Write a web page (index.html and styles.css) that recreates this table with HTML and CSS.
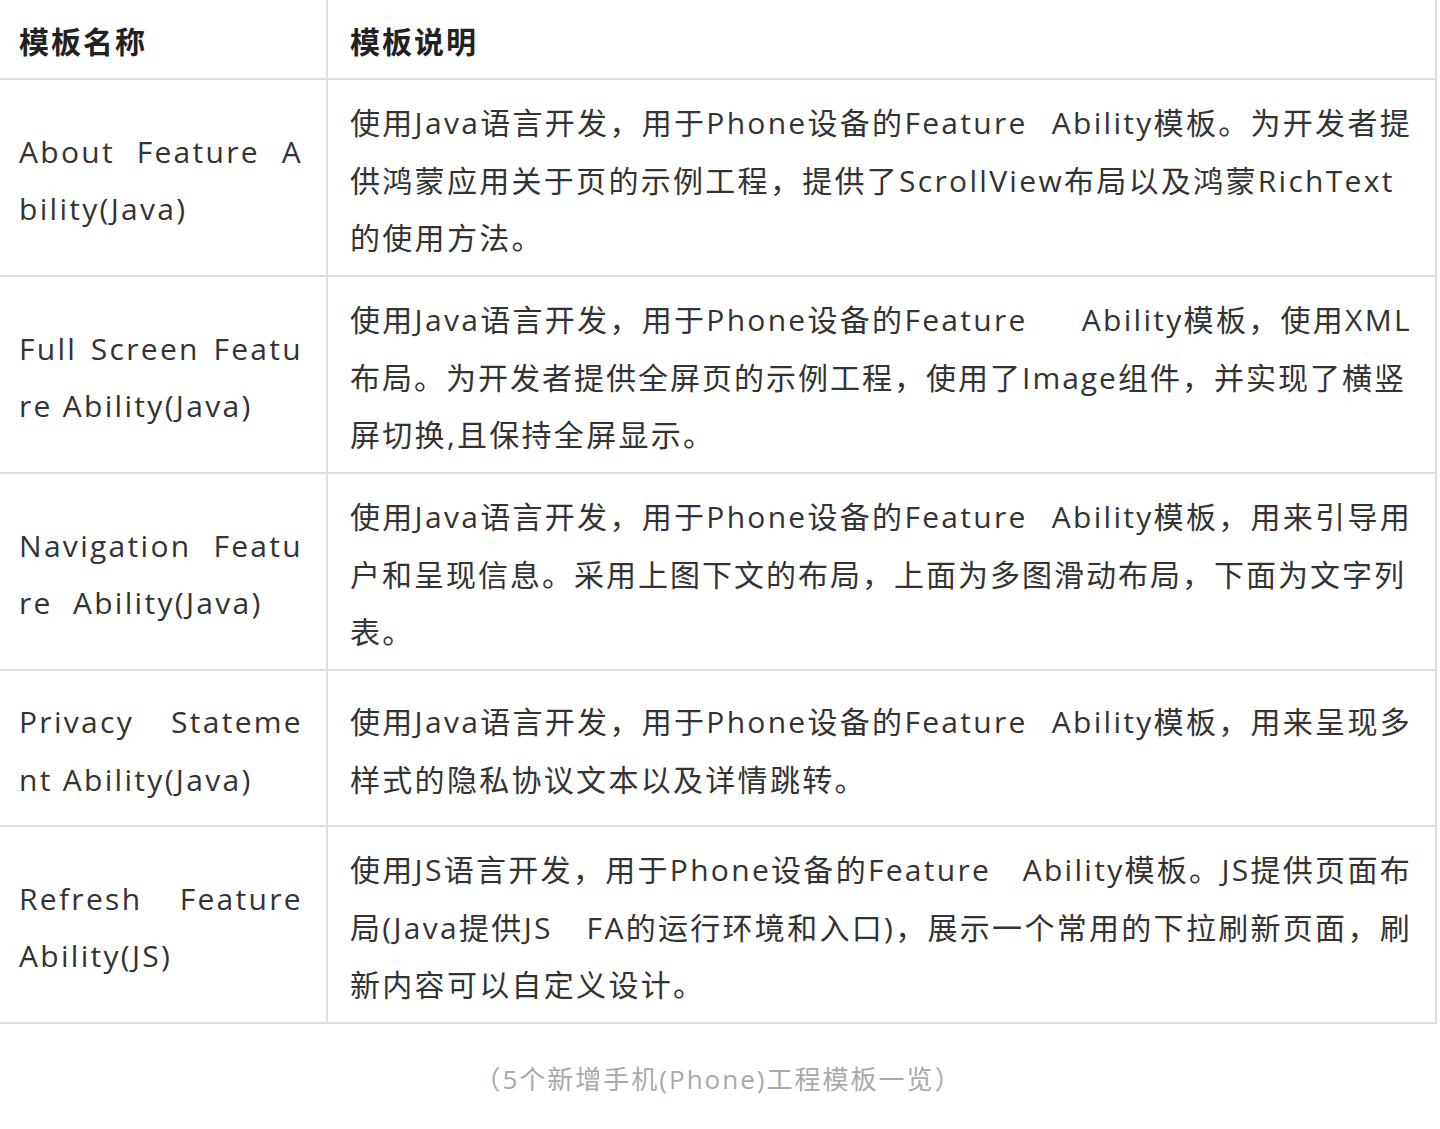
FILE: index.html
```html
<!DOCTYPE html>
<html lang="zh-CN">
<head>
    <meta charset="UTF-8">
    <meta name="viewport" content="width=device-width, initial-scale=1.0">
    <title>模板一览</title>
    <link rel="stylesheet" href="styles.css">
</head>
<body>
    <div class="page">
        <table class="tpl-table">
            <tr class="head-row">
                <td class="name-cell"><span class="ln">模板名称</span></td>
                <td class="desc-cell"><span class="ln">模板说明</span></td>
            </tr>
            <tr>
                <td class="name-cell">
                    <span class="ln spread"><span>About</span><span>Feature</span><span>A</span></span>
                    <span class="ln">bility(Java)</span>
                </td>
                <td class="desc-cell">
                    <span class="ln spread"><span>使用Java语言开发，用于Phone设备的Feature</span><span>Ability模板。为开发者提</span></span>
                    <span class="ln">供鸿蒙应用关于页的示例工程，提供了ScrollView布局以及鸿蒙RichText</span>
                    <span class="ln">的使用方法。</span>
                </td>
            </tr>
            <tr>
                <td class="name-cell">
                    <span class="ln spread"><span>Full</span><span>Screen</span><span>Featu</span></span>
                    <span class="ln">re Ability(Java)</span>
                </td>
                <td class="desc-cell">
                    <span class="ln spread"><span>使用Java语言开发，用于Phone设备的Feature</span><span>Ability模板，使用XML</span></span>
                    <span class="ln tight">布局。为开发者提供全屏页的示例工程，使用了Image组件，并实现了横竖</span>
                    <span class="ln">屏切换,且保持全屏显示。</span>
                </td>
            </tr>
            <tr>
                <td class="name-cell">
                    <span class="ln spread"><span>Navigation</span><span>Featu</span></span>
                    <span class="ln">re&nbsp;&nbsp;Ability(Java)</span>
                </td>
                <td class="desc-cell">
                    <span class="ln spread"><span>使用Java语言开发，用于Phone设备的Feature</span><span>Ability模板，用来引导用</span></span>
                    <span class="ln tight">户和呈现信息。采用上图下文的布局，上面为多图滑动布局，下面为文字列</span>
                    <span class="ln">表。</span>
                </td>
            </tr>
            <tr class="short-row">
                <td class="name-cell">
                    <span class="ln spread"><span>Privacy</span><span>Stateme</span></span>
                    <span class="ln">nt Ability(Java)</span>
                </td>
                <td class="desc-cell">
                    <span class="ln spread"><span>使用Java语言开发，用于Phone设备的Feature</span><span>Ability模板，用来呈现多</span></span>
                    <span class="ln">样式的隐私协议文本以及详情跳转。</span>
                </td>
            </tr>
            <tr>
                <td class="name-cell">
                    <span class="ln spread"><span>Refresh</span><span>Feature</span></span>
                    <span class="ln">Ability(JS)</span>
                </td>
                <td class="desc-cell">
                    <span class="ln spread"><span>使用JS语言开发，用于Phone设备的Feature</span><span>Ability模板。JS提供页面布</span></span>
                    <span class="ln spread"><span>局(Java提供JS</span><span>FA的运行环境和入口)，展示一个常用的下拉刷新页面，刷</span></span>
                    <span class="ln">新内容可以自定义设计。</span>
                </td>
            </tr>
        </table>

        <p class="caption">（5个新增手机(Phone)工程模板一览）</p>
    </div>
</body>
</html>
```

FILE: styles.css
```css
*{
    margin: 0;
    padding: 0;
    box-sizing: border-box;
}

body{
    background-color: #ffffff;
    font-family: "Open Sans", "Noto Sans CJK SC", sans-serif;
    color: #333333;
}

.page{
    width: 1437px;
}

.tpl-table{
    width: 1437px;
    border-collapse: separate;
    border-spacing: 0;
    table-layout: fixed;
}

.tpl-table td{
    border-bottom: 2px solid #dddddd;
    vertical-align: middle;
    font-size: 30px;
    letter-spacing: 2.3px;
    line-height: 57.5px;
    padding-top: 14px;
    padding-bottom: 8.5px;
}

.name-cell{
    width: 326px;
    padding-left: 19px;
    padding-right: 23px;
}

.desc-cell{
    border-left: 2px solid #dddddd;
    border-right: 2px solid #dddddd;
    padding-left: 22px;
    padding-right: 23px;
}

.head-row td{
    font-weight: 700;
    color: #222222;
    letter-spacing: 2px;
    padding-top: 13px;
    padding-bottom: 7.5px;
}

.short-row{
    height: 156px;
}

.ln{
    display: block;
    white-space: nowrap;
}

/* all-chinese lines run a bit wider than the original */
.tight{
    letter-spacing: 2px;
}

/* lines where only the blank gets stretched */
.spread{
    display: flex;
    justify-content: space-between;
}

.caption{
    margin-top: 35px;
    text-align: center;
    font-size: 26px;
    letter-spacing: 2px;
    line-height: 40px;
    color: #a9a9a9;
}
```
